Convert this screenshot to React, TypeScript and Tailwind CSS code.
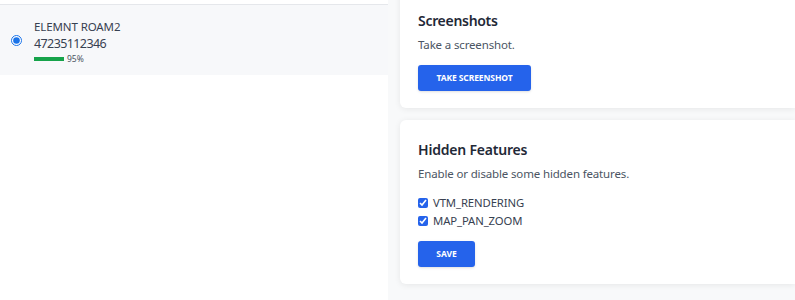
import React from "react";

export default function App() {
  return (
    <div
      className="flex h-[300px] w-[795px] overflow-hidden bg-[#f8f9fa]"
      style={{ fontFamily: '"Noto Sans", "Open Sans", sans-serif' }}
    >
      {/* Device list */}
      <div className="w-[388px] shrink-0 bg-white pt-1">
        <div className="border-t border-[#e5e7eb]">
          <label className="flex h-[70px] items-center bg-[#f7f8fa] pl-[11px]">
            <input
              type="radio"
              defaultChecked
              className="mr-[12px] h-[11px] w-[11px] accent-[#1a73e8]"
            />
            <div className="flex flex-col pt-[2px]">
              <span className="text-[11.5px] leading-[17px] tracking-[-0.1px] text-[#374151]">ELEMNT ROAM2</span>
              <span className="text-[12.5px] leading-[18px] tracking-[-0.6px] text-[#374151]">47235112346</span>
              <div className="flex items-center gap-[3px]">
                <div className="h-[4px] w-[30px] bg-[#16a34a]" />
                <span className="text-[8.5px] leading-[12px] text-[#4b5563]">95%</span>
              </div>
            </div>
          </label>
        </div>
      </div>

      {/* Settings cards */}
      <div className="ml-3 mt-[-9px] flex flex-1 flex-col gap-3">
        <section className="rounded-l-md bg-white px-[18px] pb-[17px] pt-[18px] shadow-[0_1px_6px_rgba(0,0,0,0.08)]">
          <h2 className="text-[14px] font-semibold leading-6 tracking-[-0.3px] text-[#1f2937]">Screenshots</h2>
          <p className="mt-0.5 text-[11.5px] leading-5 tracking-[-0.15px] text-[#4b5563]">Take a screenshot.</p>
          <button className="mt-[10px] h-[26px] w-[113px] rounded-[3px] bg-[#2563eb] text-[8.5px] font-bold tracking-[-0.1px] text-white shadow-sm">
            TAKE SCREENSHOT
          </button>
        </section>

        <section className="rounded-l-md bg-white px-[18px] pb-[17px] pt-[18px] shadow-[0_1px_6px_rgba(0,0,0,0.08)]">
          <h2 className="text-[14px] font-semibold leading-6 tracking-[-0.2px] text-[#1f2937]">Hidden Features</h2>
          <p className="mt-[2px] text-[11.5px] leading-5 tracking-[-0.15px] text-[#4b5563]">Enable or disable some hidden features.</p>
          <div className="mt-[10px] flex flex-col">
            {["VTM_RENDERING", "MAP_PAN_ZOOM"].map((f) => (
              <label key={f} className="flex h-[18px] items-center gap-[5px] text-[11.3px] tracking-[-0.1px] text-[#374151]">
                <input type="checkbox" defaultChecked className="h-[10px] w-[10px] accent-[#2563eb]" />
                {f}
              </label>
            ))}
          </div>
          <button className="mt-[11px] h-[26px] w-[57px] rounded-[3px] bg-[#2563eb] text-[8.5px] font-bold text-white shadow-sm">
            SAVE
          </button>
        </section>
      </div>
    </div>
  );
}
